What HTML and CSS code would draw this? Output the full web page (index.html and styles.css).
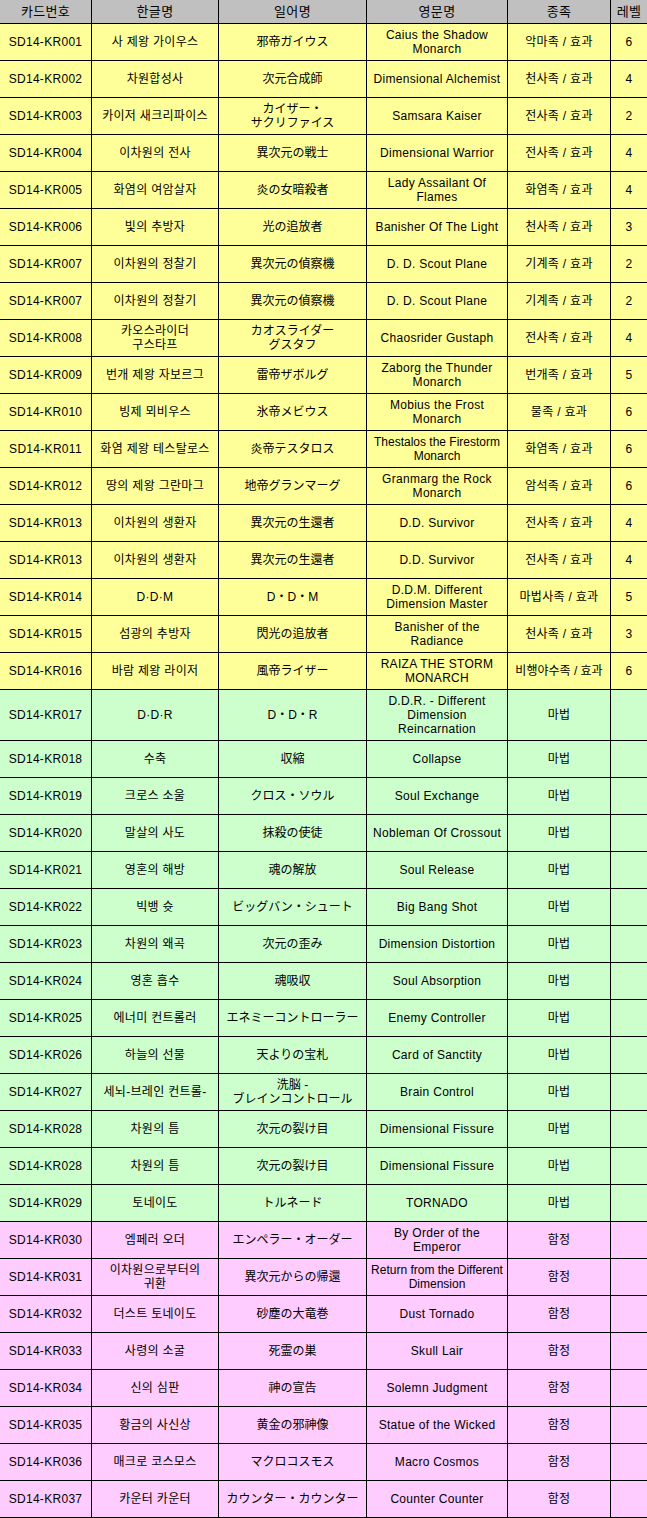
FILE: index.html
```html
<!DOCTYPE html>
<html lang="ko">
<head>
<meta charset="utf-8">
<title>SD14 카드 리스트</title>
<link rel="stylesheet" href="styles.css">
</head>
<body>
<table class="cards">
  <colgroup>
    <col class="c-no"><col class="c-kr"><col class="c-jp"><col class="c-en"><col class="c-type"><col class="c-lv">
  </colgroup>
  <thead>
    <tr class="head">
      <th>카드번호</th><th>한글명</th><th>일어명</th><th>영문명</th><th>종족</th><th class="last">레벨</th>
    </tr>
  </thead>
  <tbody>
    <tr class="monster"><td>SD14-KR001</td><td>사 제왕 가이우스</td><td class="jp">邪帝ガイウス</td><td>Caius the Shadow<br>Monarch</td><td>악마족 / 효과</td><td class="last">6</td></tr>
    <tr class="monster"><td>SD14-KR002</td><td>차원합성사</td><td class="jp">次元合成師</td><td>Dimensional Alchemist</td><td>천사족 / 효과</td><td class="last">4</td></tr>
    <tr class="monster"><td>SD14-KR003</td><td>카이저 새크리파이스</td><td class="jp">カイザー・<br>サクリファイス</td><td>Samsara Kaiser</td><td>전사족 / 효과</td><td class="last">2</td></tr>
    <tr class="monster"><td>SD14-KR004</td><td>이차원의 전사</td><td class="jp">異次元の戦士</td><td>Dimensional Warrior</td><td>전사족 / 효과</td><td class="last">4</td></tr>
    <tr class="monster"><td>SD14-KR005</td><td>화염의 여암살자</td><td class="jp">炎の女暗殺者</td><td>Lady Assailant Of<br>Flames</td><td>화염족 / 효과</td><td class="last">4</td></tr>
    <tr class="monster"><td>SD14-KR006</td><td>빛의 추방자</td><td class="jp">光の追放者</td><td>Banisher Of The Light</td><td>천사족 / 효과</td><td class="last">3</td></tr>
    <tr class="monster"><td>SD14-KR007</td><td>이차원의 정찰기</td><td class="jp">異次元の偵察機</td><td>D. D. Scout Plane</td><td>기계족 / 효과</td><td class="last">2</td></tr>
    <tr class="monster"><td>SD14-KR007</td><td>이차원의 정찰기</td><td class="jp">異次元の偵察機</td><td>D. D. Scout Plane</td><td>기계족 / 효과</td><td class="last">2</td></tr>
    <tr class="monster"><td>SD14-KR008</td><td>카오스라이더<br>구스타프</td><td class="jp">カオスライダー<br>グスタフ</td><td>Chaosrider Gustaph</td><td>전사족 / 효과</td><td class="last">4</td></tr>
    <tr class="monster"><td>SD14-KR009</td><td>번개 제왕 자보르그</td><td class="jp">雷帝ザボルグ</td><td>Zaborg the Thunder<br>Monarch</td><td>번개족 / 효과</td><td class="last">5</td></tr>
    <tr class="monster"><td>SD14-KR010</td><td>빙제 뫼비우스</td><td class="jp">氷帝メビウス</td><td>Mobius the Frost<br>Monarch</td><td>물족 / 효과</td><td class="last">6</td></tr>
    <tr class="monster"><td>SD14-KR011</td><td>화염 제왕 테스탈로스</td><td class="jp">炎帝テスタロス</td><td class="tight">Thestalos the Firestorm<br>Monarch</td><td>화염족 / 효과</td><td class="last">6</td></tr>
    <tr class="monster"><td>SD14-KR012</td><td>땅의 제왕 그란마그</td><td class="jp">地帝グランマーグ</td><td>Granmarg the Rock<br>Monarch</td><td>암석족 / 효과</td><td class="last">6</td></tr>
    <tr class="monster"><td>SD14-KR013</td><td>이차원의 생환자</td><td class="jp">異次元の生還者</td><td>D.D. Survivor</td><td>전사족 / 효과</td><td class="last">4</td></tr>
    <tr class="monster"><td>SD14-KR013</td><td>이차원의 생환자</td><td class="jp">異次元の生還者</td><td>D.D. Survivor</td><td>전사족 / 효과</td><td class="last">4</td></tr>
    <tr class="monster"><td>SD14-KR014</td><td>D·D·M</td><td class="jp">D・D・M</td><td>D.D.M.  Different<br>Dimension Master</td><td>마법사족 / 효과</td><td class="last">5</td></tr>
    <tr class="monster"><td>SD14-KR015</td><td>섬광의 추방자</td><td class="jp">閃光の追放者</td><td>Banisher of the<br>Radiance</td><td>천사족 / 효과</td><td class="last">3</td></tr>
    <tr class="monster"><td>SD14-KR016</td><td>바람 제왕 라이저</td><td class="jp">風帝ライザー</td><td>RAIZA THE STORM<br>MONARCH</td><td class="tight">비행야수족 / 효과</td><td class="last">6</td></tr>
    <tr class="spell tall"><td>SD14-KR017</td><td>D·D·R</td><td class="jp">D・D・R</td><td>D.D.R. - Different<br>Dimension<br>Reincarnation</td><td>마법</td><td class="last"></td></tr>
    <tr class="spell"><td>SD14-KR018</td><td>수축</td><td class="jp">収縮</td><td>Collapse</td><td>마법</td><td class="last"></td></tr>
    <tr class="spell"><td>SD14-KR019</td><td>크로스 소울</td><td class="jp">クロス・ソウル</td><td>Soul Exchange</td><td>마법</td><td class="last"></td></tr>
    <tr class="spell"><td>SD14-KR020</td><td>말살의 사도</td><td class="jp">抹殺の使徒</td><td>Nobleman Of Crossout</td><td>마법</td><td class="last"></td></tr>
    <tr class="spell"><td>SD14-KR021</td><td>영혼의 해방</td><td class="jp">魂の解放</td><td>Soul Release</td><td>마법</td><td class="last"></td></tr>
    <tr class="spell"><td>SD14-KR022</td><td>빅뱅 슛</td><td class="jp">ビッグバン・シュート</td><td>Big Bang Shot</td><td>마법</td><td class="last"></td></tr>
    <tr class="spell"><td>SD14-KR023</td><td>차원의 왜곡</td><td class="jp">次元の歪み</td><td>Dimension Distortion</td><td>마법</td><td class="last"></td></tr>
    <tr class="spell"><td>SD14-KR024</td><td>영혼 흡수</td><td class="jp">魂吸収</td><td>Soul Absorption</td><td>마법</td><td class="last"></td></tr>
    <tr class="spell"><td>SD14-KR025</td><td>에너미 컨트롤러</td><td class="jp">エネミーコントローラー</td><td>Enemy Controller</td><td>마법</td><td class="last"></td></tr>
    <tr class="spell"><td>SD14-KR026</td><td>하늘의 선물</td><td class="jp">天よりの宝札</td><td>Card of Sanctity</td><td>마법</td><td class="last"></td></tr>
    <tr class="spell"><td>SD14-KR027</td><td>세뇌-브레인 컨트롤-</td><td class="jp">洗脳 -<br>ブレインコントロール</td><td>Brain Control</td><td>마법</td><td class="last"></td></tr>
    <tr class="spell"><td>SD14-KR028</td><td>차원의 틈</td><td class="jp">次元の裂け目</td><td>Dimensional Fissure</td><td>마법</td><td class="last"></td></tr>
    <tr class="spell"><td>SD14-KR028</td><td>차원의 틈</td><td class="jp">次元の裂け目</td><td>Dimensional Fissure</td><td>마법</td><td class="last"></td></tr>
    <tr class="spell"><td>SD14-KR029</td><td>토네이도</td><td class="jp">トルネード</td><td>TORNADO</td><td>마법</td><td class="last"></td></tr>
    <tr class="trap"><td>SD14-KR030</td><td>엠페러 오더</td><td class="jp">エンペラー・オーダー</td><td>By Order of the<br>Emperor</td><td>함정</td><td class="last"></td></tr>
    <tr class="trap"><td>SD14-KR031</td><td>이차원으로부터의<br>귀환</td><td class="jp">異次元からの帰還</td><td class="tight">Return from the Different<br>Dimension</td><td>함정</td><td class="last"></td></tr>
    <tr class="trap"><td>SD14-KR032</td><td>더스트 토네이도</td><td class="jp">砂塵の大竜巻</td><td>Dust Tornado</td><td>함정</td><td class="last"></td></tr>
    <tr class="trap"><td>SD14-KR033</td><td>사령의 소굴</td><td class="jp">死霊の巣</td><td>Skull Lair</td><td>함정</td><td class="last"></td></tr>
    <tr class="trap"><td>SD14-KR034</td><td>신의 심판</td><td class="jp">神の宣告</td><td>Solemn Judgment</td><td>함정</td><td class="last"></td></tr>
    <tr class="trap"><td>SD14-KR035</td><td>황금의 사신상</td><td class="jp">黄金の邪神像</td><td>Statue of the Wicked</td><td>함정</td><td class="last"></td></tr>
    <tr class="trap"><td>SD14-KR036</td><td>매크로 코스모스</td><td class="jp">マクロコスモス</td><td>Macro Cosmos</td><td>함정</td><td class="last"></td></tr>
    <tr class="trap"><td>SD14-KR037</td><td>카운터 카운터</td><td class="jp">カウンター・カウンター</td><td>Counter Counter</td><td>함정</td><td class="last"></td></tr>
  </tbody>
</table>
</body>
</html>
```

FILE: styles.css
```css
html, body {
  margin: 0;
  padding: 0;
  background: #ffffff;
}

.cards {
  width: 647px;
  table-layout: fixed;
  border-collapse: separate;
  border-spacing: 0;
  font-family: "Liberation Sans", "Noto Sans CJK KR", sans-serif;
  font-size: 12px;
  line-height: 14px;
  letter-spacing: 0.3px;
  color: #000000;
}

.c-no { width: 92px; }
.c-kr { width: 127px; }
.c-jp { width: 148px; }
.c-en { width: 141px; }
.c-type { width: 103px; }
.c-lv { width: 36px; }

.cards th,
.cards td {
  box-sizing: border-box;
  padding: 0;
  text-align: center;
  vertical-align: middle;
  white-space: nowrap;
  overflow: hidden;
  border-right: 1px solid #000000;
  border-bottom: 1px solid #000000;
  font-weight: normal;
}

.cards th.last,
.cards td.last {
  border-right: none;
}

.cards .jp {
  font-family: "Liberation Sans", "Noto Sans CJK JP", sans-serif;
  letter-spacing: 0;
}

.cards td.tight {
  letter-spacing: 0;
}

.head th {
  height: 24px;
  background: #c0c0c0;
  font-size: 13px;
}

.cards tbody td {
  height: 37px;
}

.cards tbody tr.tall td {
  height: 51px;
}

.monster td { background: #ffff99; }
.spell td { background: #ccffcc; }
.trap td { background: #ffccff; }
```
